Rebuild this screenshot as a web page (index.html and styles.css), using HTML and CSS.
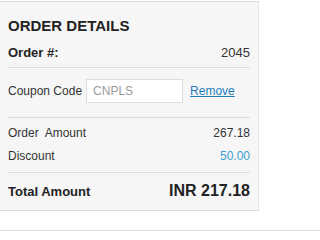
FILE: index.html
```html
<!DOCTYPE html>
<html>
<head>
<meta charset="utf-8">
<link rel="stylesheet" href="styles.css">
</head>
<body>
<div class="panel">
  <h2 class="title">ORDER DETAILS</h2>
  <div class="row order-no">
    <span class="label-bold">Order #:</span>
    <span class="value">2045</span>
  </div>
  <div class="coupon">
    <span class="coupon-label">Coupon Code</span>
    <div class="coupon-input">CNPLS</div>
    <a class="remove" href="#">Remove</a>
  </div>
  <div class="amounts">
    <div class="row line">
      <span>Order&nbsp; Amount</span>
      <span>267.18</span>
    </div>
    <div class="row line">
      <span>Discount</span>
      <span class="discount">50.00</span>
    </div>
  </div>
  <div class="row total">
    <span class="total-label">Total Amount</span>
    <span class="total-value">INR 217.18</span>
  </div>
</div>
<div class="below"></div>
</body>
</html>
```

FILE: styles.css
```css
html, body {
  margin: 0;
  padding: 0;
  background: #fff;
}
body {
  font-family: "Liberation Sans", Arial, sans-serif;
  color: #333;
  padding-top: 1px;
}
.panel {
  width: 259px;
  box-sizing: border-box;
  background: #f6f6f6;
  border-top: 1px solid #dcdcdc;
  border-right: 1px solid #e2e2e2;
  border-bottom: 1px solid #dcdcdc;
  padding: 15px 8px 0 8px;
}
.title {
  margin: 0;
  font-size: 15px;
  line-height: 18px;
  font-weight: bold;
  color: #222;
}
.row {
  display: flex;
  justify-content: space-between;
  align-items: baseline;
}
.order-no {
  margin-top: 10px;
  padding-bottom: 6px;
  border-bottom: 1px solid #dcdcdc;
  line-height: 16px;
}
.label-bold {
  font-size: 13px;
  font-weight: bold;
  color: #222;
}
.value {
  font-size: 13px;
  color: #333;
}
.coupon {
  display: flex;
  align-items: center;
  padding: 11px 0 14px 0;
  border-bottom: 1px solid #dcdcdc;
  font-size: 12px;
}
.coupon-label {
  color: #333;
}
.coupon-input {
  box-sizing: border-box;
  width: 97px;
  height: 24px;
  margin-left: 4px;
  background: #fff;
  border: 1px solid #dddddd;
  padding-left: 6px;
  line-height: 22px;
  color: #9a9a9a;
}
.remove {
  margin-left: 7px;
  color: #1d7ebe;
  text-decoration: underline;
}
.amounts {
  display: flex;
  flex-direction: column;
  gap: 7px;
  padding: 7px 0 8px 0;
  border-bottom: 1px solid #dcdcdc;
}
.line {
  font-size: 12px;
  line-height: 16px;
  color: #333;
}
.discount {
  color: #3a9fd0;
}
.total {
  padding: 8px 0 8px 0;
  line-height: 20px;
}
.total-label {
  font-size: 13px;
  font-weight: bold;
  color: #222;
}
.total-value {
  font-size: 16px;
  font-weight: bold;
  color: #222;
}
.below {
  margin-top: 19px;
  border-top: 1px solid #dcdcdc;
}
```
